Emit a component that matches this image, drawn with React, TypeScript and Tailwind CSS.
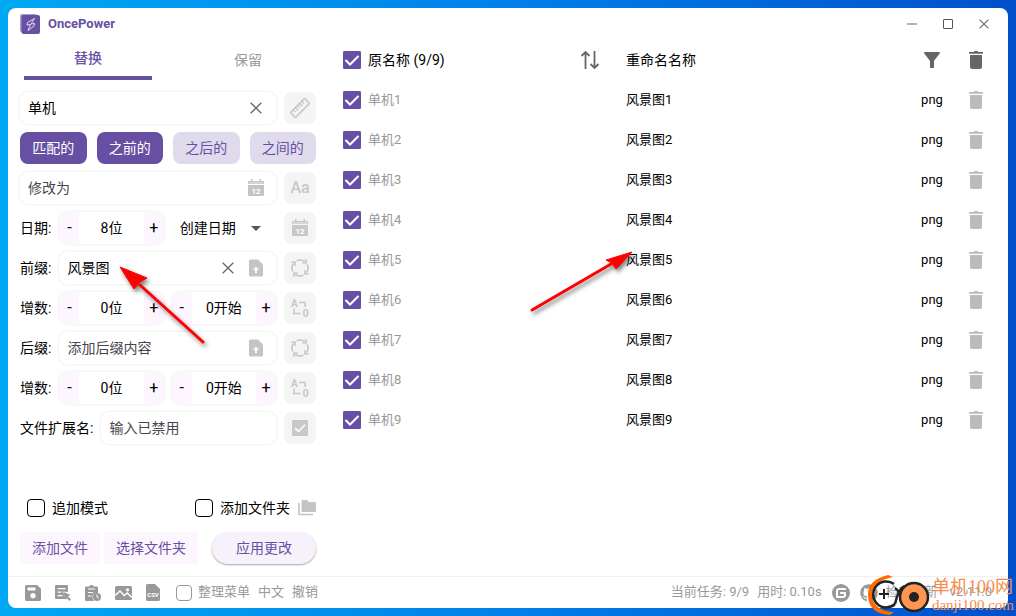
import { useState, type ReactNode } from "react";
import { clsx } from "clsx";
import { FaGithub } from "react-icons/fa";
import { MdArrowDropDown, MdFilterAlt } from "react-icons/md";
import { SiGitee } from "react-icons/si";

const files = [1, 2, 3, 4, 5, 6, 7, 8, 9].map((n) => ({
  id: n,
  from: `单机${n}`,
  to: `风景图${n}`,
  ext: "png",
}));

function LogoIcon() {
  return (
    <svg width="20" height="20" viewBox="0 0 20 20" fill="none">
      <rect width="17" height="18" rx="2" fill="#a999cf" />
      <rect x="1.500" y="1" width="18.500" height="19" rx="2" fill="#6750a4" />
      <path
        d="M14.500 4.500 7.500 8.500 7 11l3.500-.5-2.500 6 6-4.500.5-2.500-3.500.5z"
        stroke="#e4dcf4"
        strokeWidth="1"
        strokeLinejoin="round"
      />
    </svg>
  );
}

function CloseIcon({ size = 12 }: { size?: number }) {
  return (
    <svg width={size} height={size} viewBox="0 0 12 12" stroke="currentColor" strokeWidth="1.300" fill="none">
      <path d="M.7.7l10.600 10.600M11.300.7.7 11.300" />
    </svg>
  );
}

function RulerIcon() {
  return (
    <svg width="20" height="20" viewBox="0 0 20 20" fill="none" stroke="currentColor" strokeWidth="1.600">
      <g transform="rotate(-45 10 10)">
        <rect x="0" y="6.500" width="20" height="7" rx="1" />
        <path d="M4 6.500v3M7 6.500v4M10 6.500v3M13 6.500v4M16 6.500v3" strokeWidth="1.400" />
      </g>
    </svg>
  );
}

function CalendarIcon() {
  return (
    <svg width="16" height="18" viewBox="0 0 16 18">
      <path fill="currentColor" d="M3 0h1.500v2h7V0H13v2h2q1 0 1 1v2H0V3q0-1 1-1h2zM0 6h16v10q0 1-1 1H1q-1 0-1-1z" />
      <path stroke="#fff" strokeWidth=".6" d="M1 4h14" />
      <text x="8" y="14.500" textAnchor="middle" fontSize="8" fontWeight="700" fill="#fff">12</text>
    </svg>
  );
}

function FileUpIcon() {
  return (
    <svg width="14" height="18" viewBox="0 0 14 18">
      <path fill="currentColor" d="M1.500.5H9L14 5.500V16q0 1.500-1.500 1.500h-11Q0 17.500 0 16V2Q0 .5 1.500.5z" />
      <path d="M7 7.500 10 11H8v3H6v-3H4z" fill="#fff" />
    </svg>
  );
}

function CycleIcon() {
  return (
    <svg width="20" height="20" viewBox="0 0 20 20" fill="none" stroke="currentColor" strokeWidth="1.700">
      <path d="M6.500 2.800Q10 1 14.500 3.200M17.200 6.500Q19 10 16.800 14.500M13.500 17.200Q10 19 5.500 16.800M2.800 13.500Q1 10 3.200 5.500" />
      <path d="M12.300 5h3.700V1.300M15 12.300v3.700h3.700M7.700 15H4v3.700M5 7.700V4H1.300" />
    </svg>
  );
}

function AlphaNumIcon() {
  return (
    <svg width="20" height="20" viewBox="0 0 20 20" fill="none">
      <text x="1" y="9" fontSize="10" fontWeight="700" fill="currentColor">A</text>
      <text x="12.500" y="18.500" fontSize="11" fontWeight="700" fill="currentColor">0</text>
      <path d="M9 4.500h6V9M4 10.500v5h6.500" stroke="currentColor" strokeWidth="1.700" />
    </svg>
  );
}

function CheckSquareIcon() {
  return (
    <svg width="16" height="16" viewBox="0 0 16 16" fill="none">
      <rect width="16" height="16" rx="1.500" fill="currentColor" />
      <path d="m3 8 3.500 3.500L13 4.800" stroke="#f7f7f7" strokeWidth="1.800" />
    </svg>
  );
}

function TrashIcon() {
  return (
    <svg width="18" height="18" viewBox="0 0 18 18" fill="currentColor">
      <path d="M2 1h4.500Q7 0 8 0h2q1 0 1.500 1H16v1.800H2z" />
      <path d="M3 4h12v12q0 2-2 2H5q-2 0-2-2z" />
    </svg>
  );
}

function SortIcon() {
  return (
    <svg width="20" height="20" viewBox="0 0 20 20" fill="none" stroke="currentColor" strokeWidth="1.800">
      <path d="M5.500 19V2M1.500 6l4-4 4 4M14.500 1v17M10.500 14l4 4 4-4" />
    </svg>
  );
}

function FoldersIcon() {
  return (
    <svg width="18" height="16" viewBox="0 0 18 16" fill="currentColor">
      <path d="M4.500 0H9l1.800 2H17q1 0 1 1v8q0 1-1 1H4.500q-1 0-1-1V1q0-1 1-1z" />
      <path d="M.2 3h1.600v10.800H15v1.500H1.500Q.2 15.300.2 14z" />
    </svg>
  );
}

function SaveIcon() {
  return (
    <svg width="16" height="16" viewBox="0 0 16 16" fill="currentColor" fillRule="evenodd">
      <path d="M1.500 0h10.700L16 3.800v10.700q0 1.500-1.500 1.500h-13Q0 16 0 14.500v-13Q0 0 1.500 0zM2.500 2.500v3h8v-3zM8 8a2.700 2.700 0 1 0 .01 0z" />
    </svg>
  );
}

function RenameListIcon() {
  return (
    <svg width="16" height="16" viewBox="0 0 16 16" fill="currentColor" fillRule="evenodd">
      <path d="M1 0h11q1 0 1 1v6L8 6.500l1.500 5L12 14H1q-1 0-1-1V1q0-1 1-1zM2.500 3v1.200h8V3zm0 3.500v1.200h4V6.500zm0 3.500v1.200h5V10z" />
      <path d="m8.500 7 7 3-2.700 1.200L16 14.500 14.500 16l-3.200-3.300-1 2.300z" />
    </svg>
  );
}

function ClipboardClockIcon() {
  return (
    <svg width="16" height="16" viewBox="0 0 16 16" fill="none">
      <path d="M1 1.500h3Q4.500 0 6.500 0T9 1.500h3q1 0 1 1V8q-5-.5-5.500 3.500Q7.400 14 9 16H1q-1 0-1-1V2.500q0-1 1-1z" fill="currentColor" />
      <path d="M3 4h7M3 7.500h5M3 11h3.500" stroke="#fff" strokeWidth="1.200" />
      <circle cx="12" cy="12" r="4" fill="currentColor" />
      <path d="M12 9.500V12l1.800 1" stroke="#fff" strokeWidth="1" />
    </svg>
  );
}

function ImageIcon() {
  return (
    <svg width="17" height="14" viewBox="0 0 17 14" fill="none">
      <rect width="17" height="14" rx="1.500" fill="currentColor" />
      <path d="m0 9.500 5-4.500 4.200 4.500 3-2.500L17 11.500" stroke="#fff" strokeWidth="1.500" />
      <circle cx="12.500" cy="3.800" r="1.600" fill="#fff" />
    </svg>
  );
}

function CsvIcon() {
  return (
    <svg width="14" height="17" viewBox="0 0 14 17">
      <path fill="currentColor" d="M1.500 0H9l5 5v10.500q0 1.500-1.500 1.500h-11Q0 17 0 15.500v-14Q0 0 1.500 0z" />
      <text x="7" y="12.500" textAnchor="middle" fontSize="6" fontWeight="700" fill="#fff">CSV</text>
    </svg>
  );
}

function Checkbox({ label, checked = false, small, muted }: { label: string; checked?: boolean; small?: boolean; muted?: boolean }) {
  const [on, setOn] = useState(checked);

  return (
    <span className={clsx("relative grid shrink-0", small ? "size-4" : "size-[18px]")}>
      <input
        type="checkbox"
        aria-label={label}
        checked={on}
        onChange={() => setOn(!on)}
        className={clsx(
          "size-full appearance-none border",
          on ? "rounded-[1px] border-[#6750a4] bg-[#6750a4]" : "rounded-[4px]",
          !on && (muted ? "border-[#999]" : "border-black"),
        )}
      />
      {on && (
        <svg className="pointer-events-none absolute inset-0" viewBox="0 0 18 18" fill="none" stroke="#fff" strokeWidth="2">
          <path d="m2.500 9 4.500 4.500L15.500 5" />
        </svg>
      )}
    </span>
  );
}

function ToolButton({ label, children }: { label: string; children: ReactNode }) {
  return (
    <button aria-label={label} className="grid size-8 shrink-0 place-items-center rounded-lg bg-[#f4f4f4] text-[#c8c8c8]">
      {children}
    </button>
  );
}

function Field({ label, value, placeholder, children }: { label: string; value?: string; placeholder?: string; children?: ReactNode }) {
  return (
    <div className="flex h-8 min-w-0 flex-1 items-center gap-1 rounded-lg bg-white px-2 shadow-[0_0_3px_rgba(0,0,0,0.12)]">
      <input
        aria-label={label}
        defaultValue={value}
        placeholder={placeholder}
        className="w-full min-w-0 flex-1 bg-transparent outline-none placeholder:text-[#49454f]"
      />
      {children}
    </div>
  );
}

function FieldIcon({ children }: { children: ReactNode }) {
  return <span className="grid w-6 shrink-0 place-items-center text-[#c4c4c4]">{children}</span>;
}

function ClearButton() {
  return (
    <button aria-label="清除" className="grid w-6 shrink-0 place-items-center text-[#666]">
      <CloseIcon />
    </button>
  );
}

function Stepper({ initial, unit }: { initial: number; unit: string }) {
  const [n, setN] = useState(initial);

  return (
    <div className="flex h-8 flex-1 overflow-hidden rounded-lg bg-white shadow-[0_0_3px_rgba(0,0,0,0.12)]">
      <button onClick={() => setN(Math.max(0, n - 1))} className="w-5 bg-[#fdf6ff] text-base">-</button>
      <span className="grid flex-1 place-items-center">{n}{unit}</span>
      <button onClick={() => setN(n + 1)} className="w-5 bg-[#fdf6ff] text-base">+</button>
    </div>
  );
}

function Row({ label, children }: { label?: string; children: ReactNode }) {
  return (
    <div className="flex items-center gap-2">
      {label && <span className="shrink-0">{label}</span>}
      {children}
    </div>
  );
}

function RulePanel() {
  const [tab, setTab] = useState("替换");
  const [modes, setModes] = useState(["匹配的", "之前的"]);

  const toggleMode = (m: string) =>
    setModes(modes.includes(m) ? modes.filter((x) => x !== m) : [...modes, m]);

  return (
    <section className="flex w-80 shrink-0 flex-col">
      <div className="flex h-10">
        {["替换", "保留"].map((t) => (
          <button
            key={t}
            onClick={() => setTab(t)}
            className={clsx(
              "mx-4 flex-1",
              tab === t ? "border-b-4 border-[#6750a4] font-medium text-[#6750a4]" : "text-[#999]",
            )}
          >
            {t}
          </button>
        ))}
      </div>

      <div className="flex flex-1 flex-col gap-2 px-3 pt-3">
        <Row>
          <Field label="匹配内容" value="单机"><ClearButton /></Field>
          <ToolButton label="长度"><RulerIcon /></ToolButton>
        </Row>
        <div className="grid grid-cols-4 gap-2.5">
          {["匹配的", "之前的", "之后的", "之间的"].map((m) => (
            <button
              key={m}
              onClick={() => toggleMode(m)}
              className={clsx(
                "h-8 rounded-lg",
                modes.includes(m) ? "bg-[#6750a4] text-white" : "bg-[#e0daed] text-[#6750a4]",
              )}
            >
              {m}
            </button>
          ))}
        </div>
        <Row>
          <Field label="修改为" placeholder="修改为">
            <FieldIcon><CalendarIcon /></FieldIcon>
          </Field>
          <ToolButton label="大小写"><span className="text-base font-medium">Aa</span></ToolButton>
        </Row>
        <Row label="日期:">
          <Stepper initial={8} unit="位" />
          <div className="relative h-8 flex-1">
            <select aria-label="日期类型" className="size-full appearance-none bg-transparent pl-2 outline-none">
              <option>创建日期</option>
            </select>
            <MdArrowDropDown size={24} className="pointer-events-none absolute top-1 right-2 text-[#555]" />
          </div>
          <ToolButton label="日期"><CalendarIcon /></ToolButton>
        </Row>
        <Row label="前缀:">
          <Field label="前缀" value="风景图">
            <ClearButton />
            <FieldIcon><FileUpIcon /></FieldIcon>
          </Field>
          <ToolButton label="前缀循环"><CycleIcon /></ToolButton>
        </Row>
        <Row label="增数:">
          <Stepper initial={0} unit="位" />
          <Stepper initial={0} unit="开始" />
          <ToolButton label="前缀增数"><AlphaNumIcon /></ToolButton>
        </Row>
        <Row label="后缀:">
          <Field label="后缀" placeholder="添加后缀内容">
            <FieldIcon><FileUpIcon /></FieldIcon>
          </Field>
          <ToolButton label="后缀循环"><CycleIcon /></ToolButton>
        </Row>
        <Row label="增数:">
          <Stepper initial={0} unit="位" />
          <Stepper initial={0} unit="开始" />
          <ToolButton label="后缀增数"><AlphaNumIcon /></ToolButton>
        </Row>
        <Row label="文件扩展名:">
          <Field label="文件扩展名" placeholder="输入已禁用" />
          <ToolButton label="启用扩展名"><CheckSquareIcon /></ToolButton>
        </Row>

        <div className="mt-auto flex h-8 items-center justify-between pl-[7px]">
          <label className="flex items-center gap-[7px]"><Checkbox label="追加模式" />追加模式</label>
          <div className="flex items-center gap-2">
            <label className="flex items-center gap-[7px]"><Checkbox label="添加文件夹" />添加文件夹</label>
            <span className="text-[#c4c4c4]"><FoldersIcon /></span>
          </div>
        </div>
        <div className="flex gap-1 pb-3 text-[#6750a4]">
          <button className="h-8 bg-[#fdf6ff] px-3">添加文件</button>
          <button className="h-8 bg-[#fdf6ff] px-3">选择文件夹</button>
          <button className="ml-auto h-8 rounded-full bg-[#f6f1fa] px-6 shadow-[0_1px_2px_rgba(0,0,0,0.35)]">应用更改</button>
        </div>
      </div>
    </section>
  );
}

function FileTable() {
  return (
    <section className="min-w-0 flex-1 pr-3">
      <table className="w-full table-fixed">
        <colgroup>
          <col />
          <col />
          <col className="w-12" />
          <col className="w-10" />
        </colgroup>
        <thead>
          <tr className="h-10 text-left">
            <th className="pr-4 pl-[15px] font-normal">
              <div className="flex items-center gap-[7px]">
                <Checkbox label="全选" checked />
                <span className="flex-1">原名称 (9/9)</span>
                <button aria-label="排序" className="grid size-6 place-items-center text-[#666]"><SortIcon /></button>
              </div>
            </th>
            <th className="pl-2 font-normal">重命名名称</th>
            <th className="text-[#666]">
              <button aria-label="筛选" className="mx-auto block"><MdFilterAlt size={24} /></button>
            </th>
            <th className="text-[#666]">
              <button aria-label="清空" className="mx-auto block"><TrashIcon /></button>
            </th>
          </tr>
        </thead>
        <tbody>
          {files.map((f) => (
            <tr key={f.id} className="h-10">
              <td className="pl-[15px] text-[13px] text-[#999]">
                <label className="flex items-center gap-[7px]">
                  <Checkbox label={f.from} checked />
                  {f.from}
                </label>
              </td>
              <td className="pl-2 text-[13px]">{f.to}</td>
              <td className="text-center text-[13px]">{f.ext}</td>
              <td className="text-[#bbb]">
                <button aria-label="删除" className="mx-auto block"><TrashIcon /></button>
              </td>
            </tr>
          ))}
        </tbody>
      </table>
    </section>
  );
}

function TitleBar() {
  return (
    <header className="flex h-8 items-center gap-2 pr-1.5 pl-3">
      <LogoIcon />
      <h1 className="flex-1 text-[13px] font-bold text-[#6750a4]">OncePower</h1>
      <div className="flex text-[#666]">
        <button aria-label="最小化" className="grid w-9 place-items-center"><span className="h-0.5 w-2.5 bg-[#b3b3b3]" /></button>
        <button aria-label="最大化" className="grid w-9 place-items-center"><span className="size-2.5 rounded-[1px] border border-[#555]" /></button>
        <button aria-label="关闭" className="grid w-9 place-items-center"><CloseIcon size={10} /></button>
      </div>
    </header>
  );
}

function StatusBar() {
  return (
    <footer className="flex h-8 items-center justify-between border-t border-[#f0f0f0] px-4 text-[13px] text-[#999]">
      <div className="flex items-center gap-2">
        <div className="flex items-center gap-3">
          {[
            { label: "保存", icon: <SaveIcon /> },
            { label: "重命名列表", icon: <RenameListIcon /> },
            { label: "历史", icon: <ClipboardClockIcon /> },
            { label: "图片", icon: <ImageIcon /> },
            { label: "CSV", icon: <CsvIcon /> },
          ].map((b) => (
            <button key={b.label} aria-label={b.label} className="grid w-[18px] place-items-center">
              {b.icon}
            </button>
          ))}
        </div>
        <label className="ml-1.5 flex items-center gap-1.5"><Checkbox label="整理菜单" small muted />整理菜单</label>
        <button>中文</button>
        <button>撤销</button>
      </div>
      <div className="flex items-center gap-2">
        <span>当前任务: 9/9</span>
        <span>用时: 0.10s</span>
        <a href="#gitee" aria-label="Gitee" className="ml-0.5"><SiGitee size={18} /></a>
        <a href="#github" aria-label="GitHub" className="ml-0.5"><FaGithub size={18} /></a>
        <button>检查更新</button>
        <span className="ml-1">v2.11.0</span>
      </div>
    </footer>
  );
}

// red pointers drawn over the prefix field and the result column
function Arrows() {
  return (
    <svg className="pointer-events-none absolute top-0 left-0 drop-shadow-[2px_3px_2px_rgba(0,0,0,0.5)]" width="640" height="350" fill="#f00" stroke="#f00">
      <path d="M203 342 140 285" strokeWidth="3" strokeLinecap="round" />
      <path d="m120 267 27 11-7 4-6 7z" strokeWidth="1" />
      <path d="m532 310 79-46" strokeWidth="3" strokeLinecap="round" />
      <path d="m632 252-16 17-4-6-6-3z" strokeWidth="1" />
    </svg>
  );
}

function Watermark() {
  return (
    <div className="pointer-events-none absolute right-0 bottom-0 flex items-center gap-0.5 pr-0.5">
      <svg width="64" height="42" viewBox="-2 0 64 42" fill="none">
        <path d="M20 1Q-1 6 0 22q1 18 22 19l4-3Q6 37 4 22 4 8 21 4l4-1z" fill="#ff6a00" />
        <path d="M26 10A13 13 0 1 0 27 30" stroke="#222" strokeWidth="2.500" />
        <path d="M27 14Q33 18 33 28M36 12Q30 16 27 30" stroke="#222" strokeWidth="2.500" />
        <circle cx="46" cy="23" r="14" fill="#ff964f" stroke="#222" strokeWidth="2.500" />
        <circle cx="46" cy="23" r="5" fill="#222" />
        <path d="M16 15v10M11 20h10" stroke="#222" strokeWidth="2" />
      </svg>
      <div className="flex flex-col font-['Liberation_Serif','Noto_Sans_CJK_SC',serif] text-[#f78c4a]">
        <span className="text-lg leading-5">单机100网</span>
        <span className="text-[15px] leading-4">danji100.com</span>
      </div>
    </div>
  );
}

export default function App() {
  return (
    <div className="relative flex min-h-screen bg-linear-to-r from-[#00a8f4] via-[#0080ea] to-[#004fcb] p-2 font-['Roboto','Noto_Sans_CJK_SC',sans-serif] text-sm text-black">
      <main className="flex min-w-0 flex-1 flex-col overflow-hidden rounded-lg bg-white">
        <TitleBar />
        <div className="flex flex-1">
          <RulePanel />
          <FileTable />
        </div>
        <StatusBar />
      </main>
      <Arrows />
      <Watermark />
    </div>
  );
}
